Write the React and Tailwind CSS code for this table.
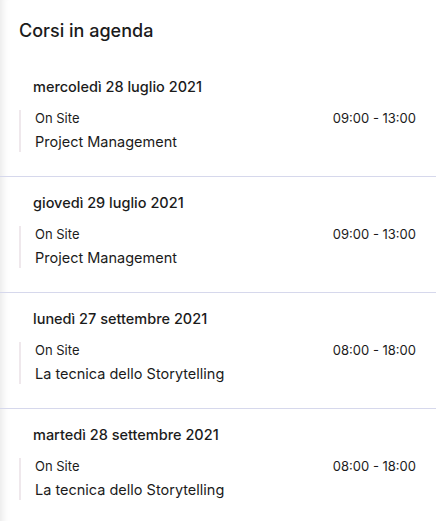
import React from 'react';

const courses = [
  { date: 'mercoledì 28 luglio 2021', mode: 'On Site', time: '09:00 - 13:00', title: 'Project Management' },
  { date: 'giovedì 29 luglio 2021', mode: 'On Site', time: '09:00 - 13:00', title: 'Project Management' },
  { date: 'lunedì 27 settembre 2021', mode: 'On Site', time: '08:00 - 18:00', title: 'La tecnica dello Storytelling' },
  { date: 'martedì 28 settembre 2021', mode: 'On Site', time: '08:00 - 18:00', title: 'La tecnica dello Storytelling' },
];

const App = () => {
  return (
    <div
      className="min-h-[521px] bg-white text-[#1b1b1b] shadow-[inset_10px_0_8px_-8px_rgba(0,0,0,0.10)]"
      style={{ fontFamily: 'Inter, "Liberation Sans", sans-serif' }}
    >
      <h2 className="px-[19px] pt-[19px] text-[18px] font-medium leading-[24px]">Corsi in agenda</h2>
      <ul className="mt-[18px]">
        {courses.map((course, index) => (
          <li
            key={`${course.date}-${index}`}
            className={`pt-[16px] pb-[24px] ${index > 0 ? 'border-t border-[#d6d8ec]' : ''}`}
          >
            <p className="pl-[33px] text-[14.5px] font-medium leading-[20px]">{course.date}</p>
            <div className="ml-[19px] mt-[13px] mr-[20px] border-l-2 border-[#efe8ec] pl-[14px]">
              <div className="flex items-center justify-between text-[13px] leading-[16px]">
                <span>{course.mode}</span>
                <span>{course.time}</span>
              </div>
              <p className="mt-[6px] text-[14.5px] leading-[20px]">{course.title}</p>
            </div>
          </li>
        ))}
      </ul>
    </div>
  );
};

export default App;
